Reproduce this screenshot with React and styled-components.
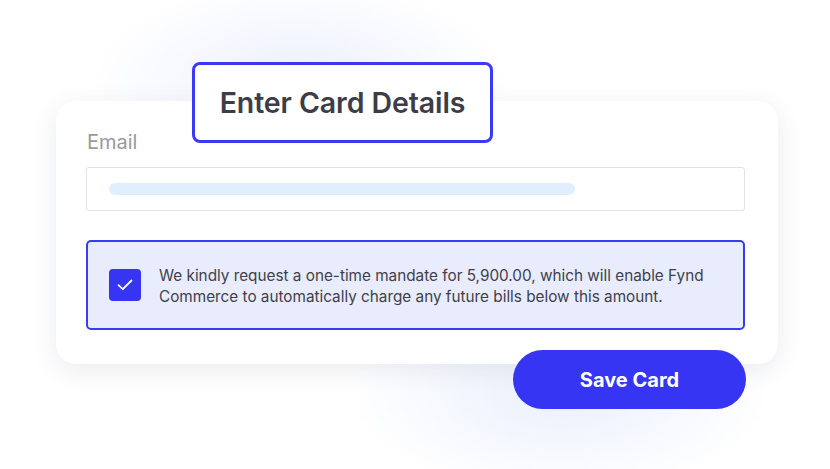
import React from "react";
import styled, { createGlobalStyle } from "styled-components";

const Global = createGlobalStyle`
  html, body { margin: 0; padding: 0; }
  body {
    width: 830px;
    height: 469px;
    overflow: hidden;
    font-family: Inter, "Noto Sans", sans-serif;
    background:
      radial-gradient(ellipse 210px 100px at 300px 80px, rgba(222, 230, 250, 0.6), rgba(222, 230, 250, 0) 100%),
      radial-gradient(ellipse 210px 100px at 560px 395px, rgba(222, 232, 250, 0.65), rgba(222, 232, 250, 0) 100%),
      #ffffff;
  }
`;

const Scene = styled.div`
  position: relative;
  width: 830px;
  height: 469px;
  padding: 101px 52px 0 56px;
  box-sizing: border-box;
`;

const Card = styled.div`
  width: 722px;
  height: 263px;
  box-sizing: border-box;
  background: #ffffff;
  border-radius: 20px;
  box-shadow: 0 6px 26px rgba(60, 70, 110, 0.11);
  padding: 29px 33px 34px 30px;
  display: flex;
  flex-direction: column;
`;

const Label = styled.div`
  font-size: 20px;
  line-height: 24px;
  color: #9a9a9a;
  padding-left: 1px;
`;

const Input = styled.div`
  margin-top: 13px;
  height: 44px;
  box-sizing: border-box;
  border: 1.5px solid #e3e3e3;
  border-radius: 3px;
  display: flex;
  align-items: center;
  padding-left: 22px;
`;

const Placeholder = styled.div`
  width: 466px;
  height: 12px;
  border-radius: 6px;
  background: #e0efff;
`;

const Consent = styled.div`
  margin-top: 29px;
  height: 90px;
  box-sizing: border-box;
  border: 2.5px solid #3a3af2;
  border-radius: 5px;
  background: #e8ecfd;
  display: flex;
  align-items: center;
  gap: 18px;
  padding-left: 21px;
`;

const Check = styled.div`
  flex: 0 0 32px;
  width: 32px;
  height: 32px;
  border-radius: 4px;
  background: #3535f3;
  display: flex;
  align-items: center;
  justify-content: center;
`;

const ConsentText = styled.p`
  margin: 0;
  font-size: 15.3px;
  line-height: 21px;
  color: #3f3f4a;
  position: relative;
  top: 1px;
`;

const TitleBox = styled.div`
  position: absolute;
  left: 192px;
  top: 62px;
  width: 301px;
  height: 81px;
  box-sizing: border-box;
  border: 3px solid #3a3af5;
  border-radius: 8px;
  background: #ffffff;
  display: flex;
  align-items: center;
  justify-content: center;
`;

const Title = styled.h1`
  margin: 0;
  font-size: 28.5px;
  font-weight: 600;
  color: #3d3d47;
  letter-spacing: -0.1px;
`;

const SaveButton = styled.button`
  position: absolute;
  left: 513px;
  top: 350px;
  width: 233px;
  height: 59px;
  border: none;
  border-radius: 30px;
  background: #3535f3;
  color: #ffffff;
  font-family: Inter, "Noto Sans", sans-serif;
  font-size: 20px;
  font-weight: 700;
  cursor: pointer;
`;

export default function App() {
  return (
    <>
      <Global />
      <Scene>
        <Card>
          <Label>Email</Label>
          <Input>
            <Placeholder />
          </Input>
          <Consent>
            <Check>
              <svg width="16" height="12" viewBox="0 0 16 12" fill="none">
                <path d="M1.5 6.2 L5.8 10.2 L14.5 1.5" stroke="#fff" strokeWidth="1.8" strokeLinecap="round" strokeLinejoin="round" />
              </svg>
            </Check>
            <ConsentText>
              We kindly request a one-time mandate for 5,900.00, which will enable Fynd
              <br />
              Commerce to automatically charge any future bills below this amount.
            </ConsentText>
          </Consent>
        </Card>
        <TitleBox>
          <Title>Enter Card Details</Title>
        </TitleBox>
        <SaveButton>Save Card</SaveButton>
      </Scene>
    </>
  );
}
